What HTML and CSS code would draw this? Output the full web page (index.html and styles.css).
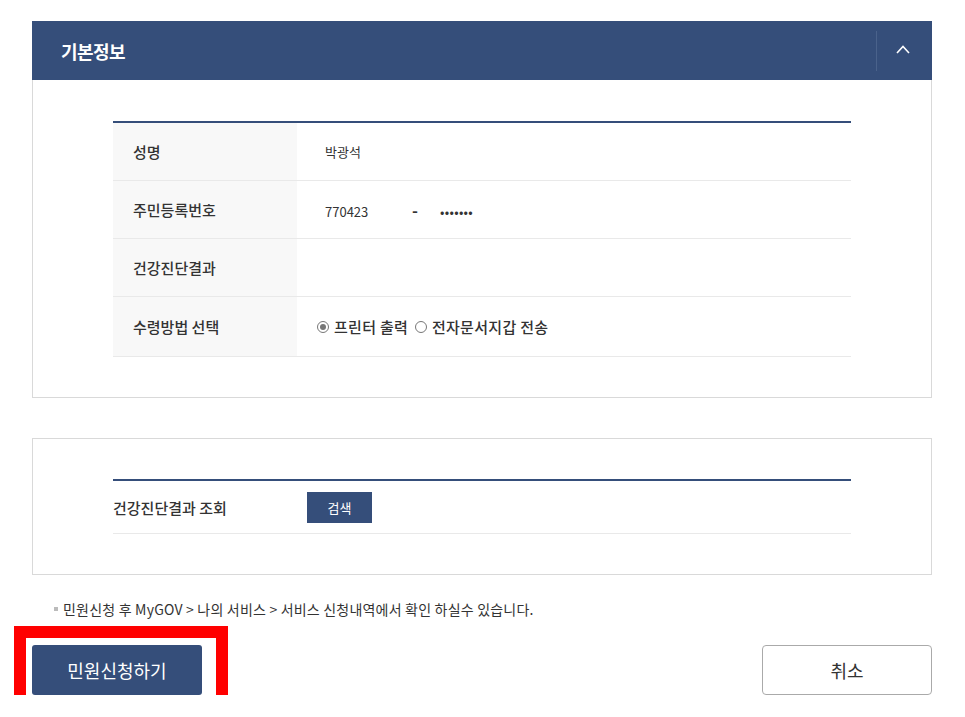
FILE: index.html
```html
<!DOCTYPE html>
<html>
<head>
  <meta charset="UTF-8">
  <title>기본정보</title>
  <link rel="stylesheet" href="styles.css">
</head>
<body>
  <div class="page">
    <div class="section-header">
      <h2>기본정보</h2>
      <button class="toggle" aria-label="접기">
        <svg width="14" height="9" viewBox="0 0 14 9"><polyline points="1,8 7,1.5 13,8" fill="none" stroke="#fff" stroke-width="1.6"/></svg>
      </button>
    </div>

    <div class="panel panel-first">
      <table class="info-table">
        <tr>
          <th>성명</th>
          <td>박광석</td>
        </tr>
        <tr>
          <th>주민등록번호</th>
          <td><span class="rrn-front">770423</span><span class="rrn-dash">-</span><span class="rrn-back">•••••••</span></td>
        </tr>
        <tr>
          <th>건강진단결과</th>
          <td></td>
        </tr>
        <tr>
          <th>수령방법 선택</th>
          <td class="radios">
            <label class="radio"><span class="radio-dot checked"></span>프린터 출력</label>
            <label class="radio"><span class="radio-dot"></span>전자문서지갑 전송</label>
          </td>
        </tr>
      </table>
    </div>

    <div class="panel panel-second">
      <table class="search-table">
        <tr>
          <th>건강진단결과 조회</th>
          <td><button class="button button-small">검색</button></td>
        </tr>
      </table>
    </div>

    <p class="note">민원신청 후 MyGOV &gt; 나의 서비스 &gt; 서비스 신청내역에서 확인 하실수 있습니다.</p>

    <div class="actions">
      <div class="submit-wrap">
        <button class="button button-large">민원신청하기</button>
        <div class="highlight"></div>
      </div>
      <button class="button-cancel">취소</button>
    </div>
  </div>
</body>
</html>
```

FILE: styles.css
```css
body {
  font-family: "Noto Sans CJK KR", "Noto Sans", sans-serif;
  margin: 0;
  background-color: white;
  color: #333;
}

.page {
  width: 900px;
  margin: 0 0 0 32px;
  padding-top: 21px;
}

.section-header {
  background-color: #354e7a;
  height: 59px;
  display: flex;
  align-items: center;
  justify-content: space-between;
}

.section-header h2 {
  margin: 0 0 0 29px;
  color: white;
  font-size: 18px;
  font-weight: 700;
  letter-spacing: -0.6px;
}

.toggle {
  width: 56px;
  height: 40px;
  border: none;
  border-left: 1px solid #4a628b;
  background: transparent;
  display: flex;
  align-items: center;
  justify-content: center;
  padding: 0 4px 2px 0;
}

.panel {
  border: 1px solid #d9d9d9;
  padding: 40px 80px;
}

.panel-first {
  border-top: none;
  padding-top: 41px;
}

.panel-second {
  margin-top: 40px;
}

table {
  width: 100%;
  border-collapse: collapse;
  border-top: 2px solid #354e7a;
}

.info-table th,
.info-table td {
  height: 57px;
  border-bottom: 1px solid #e9e9e9;
  font-size: 15px;
  text-align: left;
  padding: 0;
}

.info-table th {
  width: 164px;
  padding-left: 20px;
  background-color: #f8f8f8;
  font-weight: 500;
  color: #333;
}

.info-table td {
  padding-left: 28px;
  font-size: 13px;
  color: #333;
}

.info-table tr:last-child th,
.info-table tr:last-child td {
  height: 59px;
}

.rrn-front {
  display: inline-block;
  width: 87px;
}

.rrn-dash {
  display: inline-block;
  width: 28px;
  font-weight: 700;
  font-size: 16px;
}

.rrn-back {
  font-size: 13px;
  letter-spacing: 0.3px;
}

.radios {
  font-size: 15px !important;
  font-weight: 500;
  letter-spacing: 0.3px;
}

.radio {
  display: inline-flex;
  align-items: center;
  margin-right: 3px;
}

.radio-dot {
  width: 10px;
  height: 10px;
  border: 1px solid #777;
  border-radius: 50%;
  margin: 0 5px 0 0;
  position: relative;
  box-sizing: content-box;
}

.radio:first-child .radio-dot {
  margin-left: -8px;
}

.radio-dot.checked::after {
  content: "";
  position: absolute;
  left: 2px;
  top: 2px;
  width: 6px;
  height: 6px;
  border-radius: 50%;
  background-color: #777;
}

.search-table th,
.search-table td {
  height: 52px;
  border-bottom: 1px solid #e9e9e9;
  text-align: left;
  padding: 0;
}

.search-table th {
  width: 194px;
  font-size: 15px;
  font-weight: 500;
}

.button {
  background-color: #354e7a;
  color: white;
  border: none;
  cursor: pointer;
  font-family: inherit;
}

.button-small {
  width: 65px;
  height: 31px;
  font-size: 13px;
}

.note {
  margin: 24px 0 0 22px;
  font-size: 14px;
  line-height: 20px;
  color: #333;
  letter-spacing: 0.2px;
  display: flex;
  align-items: center;
}

.note::before {
  content: "";
  width: 4px;
  height: 4px;
  background-color: #bbb;
  margin-right: 5px;
}

.actions {
  display: flex;
  justify-content: space-between;
  margin-top: 26px;
}

.submit-wrap {
  position: relative;
}

.button-large {
  width: 170px;
  height: 50px;
  font-size: 18px;
  border-radius: 3px;
}

.highlight {
  position: absolute;
  left: -18px;
  top: -19px;
  width: 190px;
  height: 66px;
  border: 12px solid #ff0000;
  pointer-events: none;
}

.button-cancel {
  width: 170px;
  height: 50px;
  background-color: white;
  border: 1px solid #aaa;
  border-radius: 4px;
  font-size: 18px;
  font-family: inherit;
  color: #333;
}
```
